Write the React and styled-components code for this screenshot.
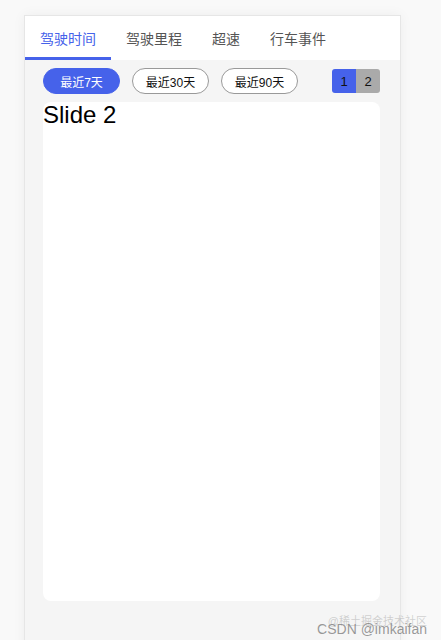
import React, { useState } from "react";
import styled, { createGlobalStyle } from "styled-components";

const Global = createGlobalStyle`
  html, body { margin: 0; padding: 0; background: #f9f9f9; }
  body { font-family: "Liberation Sans", "Noto Sans CJK SC", sans-serif; overflow: hidden; }
`;

const BLUE = "#4662ea";

const Page = styled.div`
  position: relative;
  height: 640px;
  padding: 15px 0 0 24px;
  box-sizing: border-box;
  overflow: hidden;
`;

const Card = styled.div`
  width: 377px;
  height: 640px;
  box-sizing: border-box;
  border: 1px solid #e6e6e6;
  border-bottom: none;
  background: #f5f5f5;
  box-shadow: 0 0 12px rgba(0, 0, 0, 0.05);
`;

const TabBar = styled.div`
  display: flex;
  height: 44px;
  background: #fff;
`;

const Tab = styled.div`
  padding: 0 15px;
  display: flex;
  align-items: center;
  font-size: 14px;
  color: ${(p) => (p.$active ? BLUE : "#555")};
  box-shadow: ${(p) => (p.$active ? `inset 0 -3px 0 ${BLUE}` : "none")};
  cursor: pointer;
`;

const Content = styled.div`
  padding: 8px 20px 0 18px;
  display: flex;
  flex-direction: column;
  gap: 8px;
`;

const Toolbar = styled.div`
  display: flex;
  align-items: center;
  gap: 12px;
  height: 26px;
`;

const RangeButton = styled.button`
  width: 77px;
  height: 26px;
  box-sizing: border-box;
  border-radius: 13px;
  border: 1px solid ${(p) => (p.$active ? BLUE : "#999")};
  background: ${(p) => (p.$active ? BLUE : "#fff")};
  color: ${(p) => (p.$active ? "#fff" : "#111")};
  font-family: "Liberation Sans", "Noto Sans CJK SC", sans-serif;
  font-size: 12px;
  padding: 0;
  cursor: pointer;
`;

const Pager = styled.div`
  margin-left: auto;
  display: flex;
  border-radius: 3px;
  overflow: hidden;
`;

const PageDot = styled.div`
  width: 24px;
  height: 24px;
  display: flex;
  align-items: center;
  justify-content: center;
  font-size: 13px;
  color: #111;
  background: ${(p) => (p.$active ? BLUE : "#aaaaaa")};
`;

const Slide = styled.div`
  height: 499px;
  background: #fff;
  border-radius: 8px;
  font-family: "Liberation Sans", Arial, sans-serif;
  font-size: 24px;
  line-height: 26px;
  color: #000;
`;

const Watermark = styled.div`
  position: absolute;
  right: 14px;
  bottom: 3px;
  text-align: right;
  pointer-events: none;
`;

const WatermarkSub = styled.div`
  font-size: 11px;
  color: rgba(160, 160, 160, 0.45);
  line-height: 12px;
  margin-bottom: -6px;
`;

const WatermarkMain = styled.div`
  font-size: 14px;
  color: rgba(120, 120, 120, 0.75);
  line-height: 16px;
`;

export default function App() {
  const [tab, setTab] = useState(0);
  const [range, setRange] = useState(0);
  const tabs = ["驾驶时间", "驾驶里程", "超速", "行车事件"];
  const ranges = ["最近7天", "最近30天", "最近90天"];
  return (
    <>
      <Global />
      <Page>
        <Card>
          <TabBar>
            {tabs.map((t, i) => (
              <Tab key={t} $active={i === tab} onClick={() => setTab(i)}>
                {t}
              </Tab>
            ))}
          </TabBar>
          <Content>
            <Toolbar>
              {ranges.map((r, i) => (
                <RangeButton key={r} $active={i === range} onClick={() => setRange(i)}>
                  {r}
                </RangeButton>
              ))}
              <Pager>
                <PageDot $active>1</PageDot>
                <PageDot>2</PageDot>
              </Pager>
            </Toolbar>
            <Slide>Slide 2</Slide>
          </Content>
        </Card>
        <Watermark>
          <WatermarkSub>@稀土掘金技术社区</WatermarkSub>
          <WatermarkMain>CSDN @imkaifan</WatermarkMain>
        </Watermark>
      </Page>
    </>
  );
}
